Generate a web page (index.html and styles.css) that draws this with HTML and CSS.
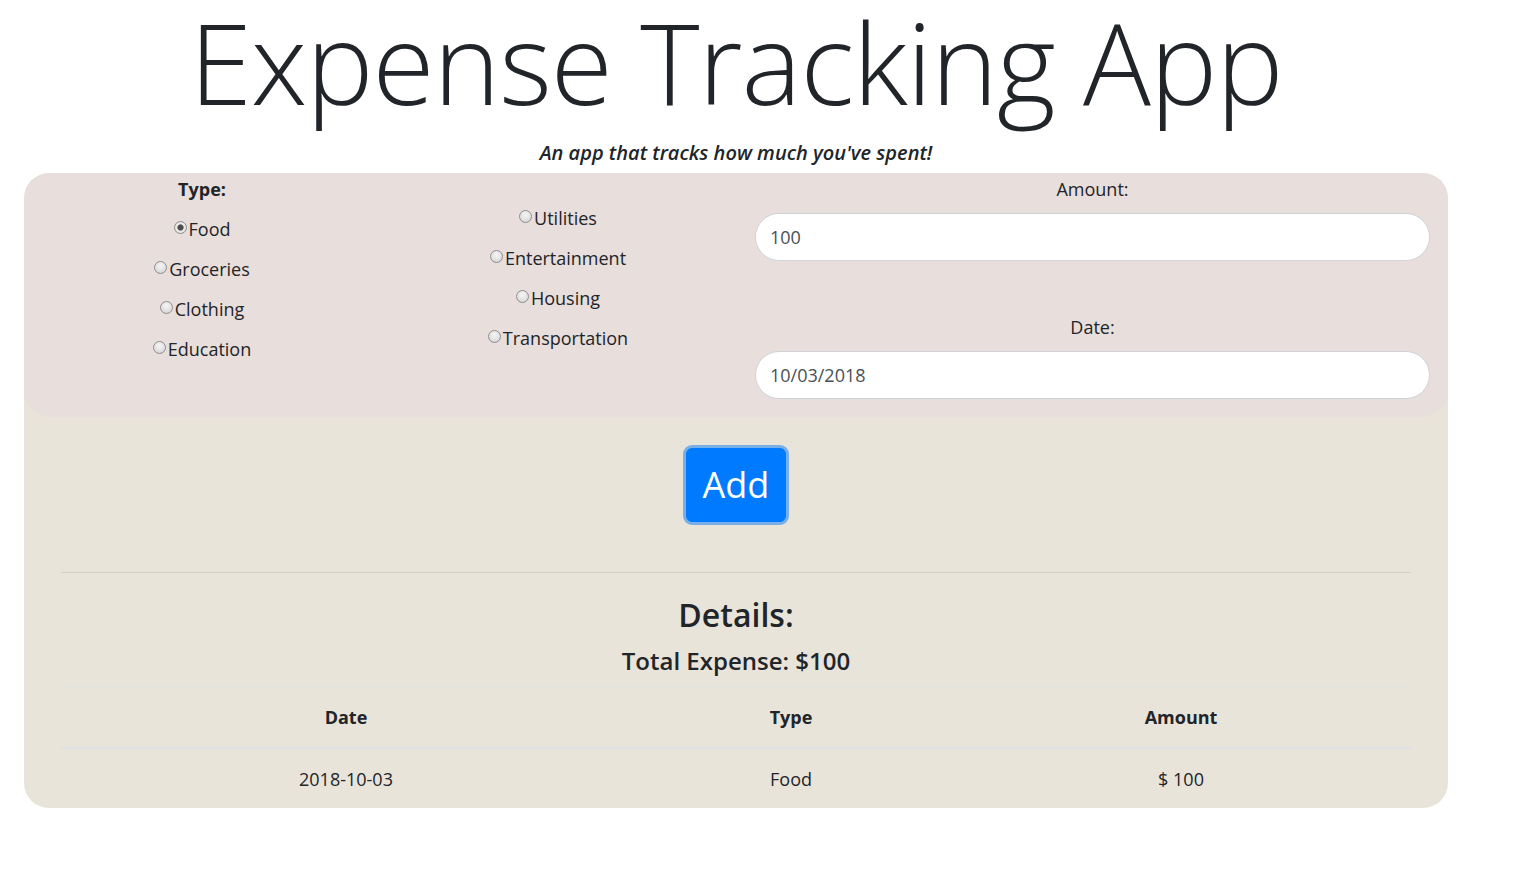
FILE: index.html
```html
<!DOCTYPE html>
<html>
<head>
<meta charset="utf-8">
<link rel="stylesheet" href="styles.css">
</head>
<body>
<div class="page">
  <h1 class="title">Expense Tracking App</h1>
  <p class="subtitle">An app that tracks how much you've spent!</p>
  <div class="panel">
    <form class="form-area">
      <div class="col col-type">
        <div class="type-label">Type:</div>
        <label class="opt"><input type="radio" name="t" checked>Food</label>
        <label class="opt"><input type="radio" name="t">Groceries</label>
        <label class="opt"><input type="radio" name="t">Clothing</label>
        <label class="opt"><input type="radio" name="t">Education</label>
      </div>
      <div class="col col-type2">
        <label class="opt"><input type="radio" name="t">Utilities</label>
        <label class="opt"><input type="radio" name="t">Entertainment</label>
        <label class="opt"><input type="radio" name="t">Housing</label>
        <label class="opt"><input type="radio" name="t">Transportation</label>
      </div>
      <div class="col col-fields">
        <div class="field-label">Amount:</div>
        <input class="pill" type="text" value="100">
        <div class="field-label date-label">Date:</div>
        <input class="pill" type="text" value="10/03/2018">
      </div>
    </form>
    <div class="btn-row"><button class="btn-add" type="button">Add</button></div>
    <div class="details">
      <hr class="rule">
      <h2 class="details-title">Details:</h2>
      <h4 class="total">Total Expense: $100</h4>
      <table class="tbl">
        <thead>
          <tr><th class="c1">Date</th><th class="c2">Type</th><th class="c3">Amount</th></tr>
        </thead>
        <tbody>
          <tr><td>2018-10-03</td><td>Food</td><td>$ 100</td></tr>
        </tbody>
      </table>
    </div>
  </div>
</div>
</body>
</html>
```
FILE: styles.css
```css
* { box-sizing: border-box; }
html, body { margin: 0; padding: 0; background: #fff; }
body {
  font-family: "Open Sans", "Noto Sans", sans-serif;
  color: #212529;
}
.page {
  width: 1424px;
  margin-left: 24px;
  padding-top: 1px;
}
.title {
  margin: -18px 0 0;
  text-align: center;
  font-weight: 300;
  font-size: 113px;
  line-height: 156px;
  letter-spacing: -1px;
  color: #212529;
  white-space: nowrap;
}
.subtitle {
  margin: -7px 0 0;
  text-align: center;
  font-style: italic;
  font-weight: 600;
  font-size: 20px;
  line-height: 41px;
}
.panel {
  background: #e9e4d9;
  border-radius: 25px;
  overflow: hidden;
}
.form-area {
  display: flex;
  background: #e8dedb;
  border-radius: 25px;
  height: 244px;
}
.col { display: flex; flex-direction: column; align-items: center; }
.col-type { width: 356px; padding-top: 4px; }
.col-type2 { width: 356px; padding-top: 33px; }
.col-fields { width: 712px; padding: 4px 18px 0 19px; align-items: stretch; }
.type-label {
  font-weight: 700;
  font-size: 18px;
  line-height: 24px;
  margin-bottom: 16px;
}
.opt {
  display: flex;
  align-items: center;
  font-size: 18px;
  line-height: 24px;
  height: 24px;
  margin-bottom: 16px;
}
.opt input {
  appearance: none;
  -webkit-appearance: none;
  width: 13px;
  height: 13px;
  margin: -3px 2px 0 0;
  border-radius: 50%;
  border: 1px solid #8f8f8f;
  background: radial-gradient(circle at 50% 35%, #f6f6f6 0%, #dedede 65%, #c4c4c4 100%);
}
.opt input:checked {
  background: radial-gradient(circle, #4d4d4d 0 2.6px, #8a8a8a 3px, #ececec 3.6px, #d4d4d4 100%);
}
.field-label {
  text-align: center;
  font-size: 18px;
  line-height: 24px;
  margin-bottom: 12px;
}
.date-label { margin-top: 54px; }
.pill {
  display: block;
  width: 100%;
  height: 48px;
  border: 1px solid #ced4da;
  border-radius: 24px;
  background: #fff;
  padding: 0 14px;
  font-family: inherit;
  font-size: 18px;
  color: #495057;
  outline: none;
}
.btn-row {
  display: flex;
  justify-content: center;
  padding-top: 31px;
}
.btn-add {
  width: 100px;
  height: 74px;
  background: #007bff;
  color: #fff;
  border: 1px solid #007bff;
  border-radius: 6px;
  box-shadow: 0 0 0 3px #79afe9;
  font-family: inherit;
  font-size: 36px;
  line-height: 1;
  padding: 0;
}
.details { padding: 0 37px; }
.rule {
  margin: 50px 0 0;
  border: 0;
  border-top: 1px solid #d3cfc5;
}
.details-title {
  margin: 0;
  padding-top: 20px;
  text-align: center;
  font-size: 32px;
  font-weight: 600;
  line-height: 44px;
}
.total {
  margin: 0;
  text-align: center;
  font-size: 24px;
  font-weight: 600;
  line-height: 48px;
  padding-bottom: 1px;
}
.tbl {
  width: 100%;
  border-collapse: collapse;
  table-layout: fixed;
}
.c1 { width: 570px; }
.c2 { width: 320px; }
.c3 { width: 460px; }
.tbl th, .tbl td {
  text-align: center;
  padding: 0;
  border-top: 1px solid #dee2e6;
  font-size: 18px;
}
.tbl th {
  font-weight: 700;
  border-bottom: 2px solid #dee2e6;
  height: 61px;
}
.tbl td { height: 60px; font-weight: 400; padding-top: 1px; }
```
